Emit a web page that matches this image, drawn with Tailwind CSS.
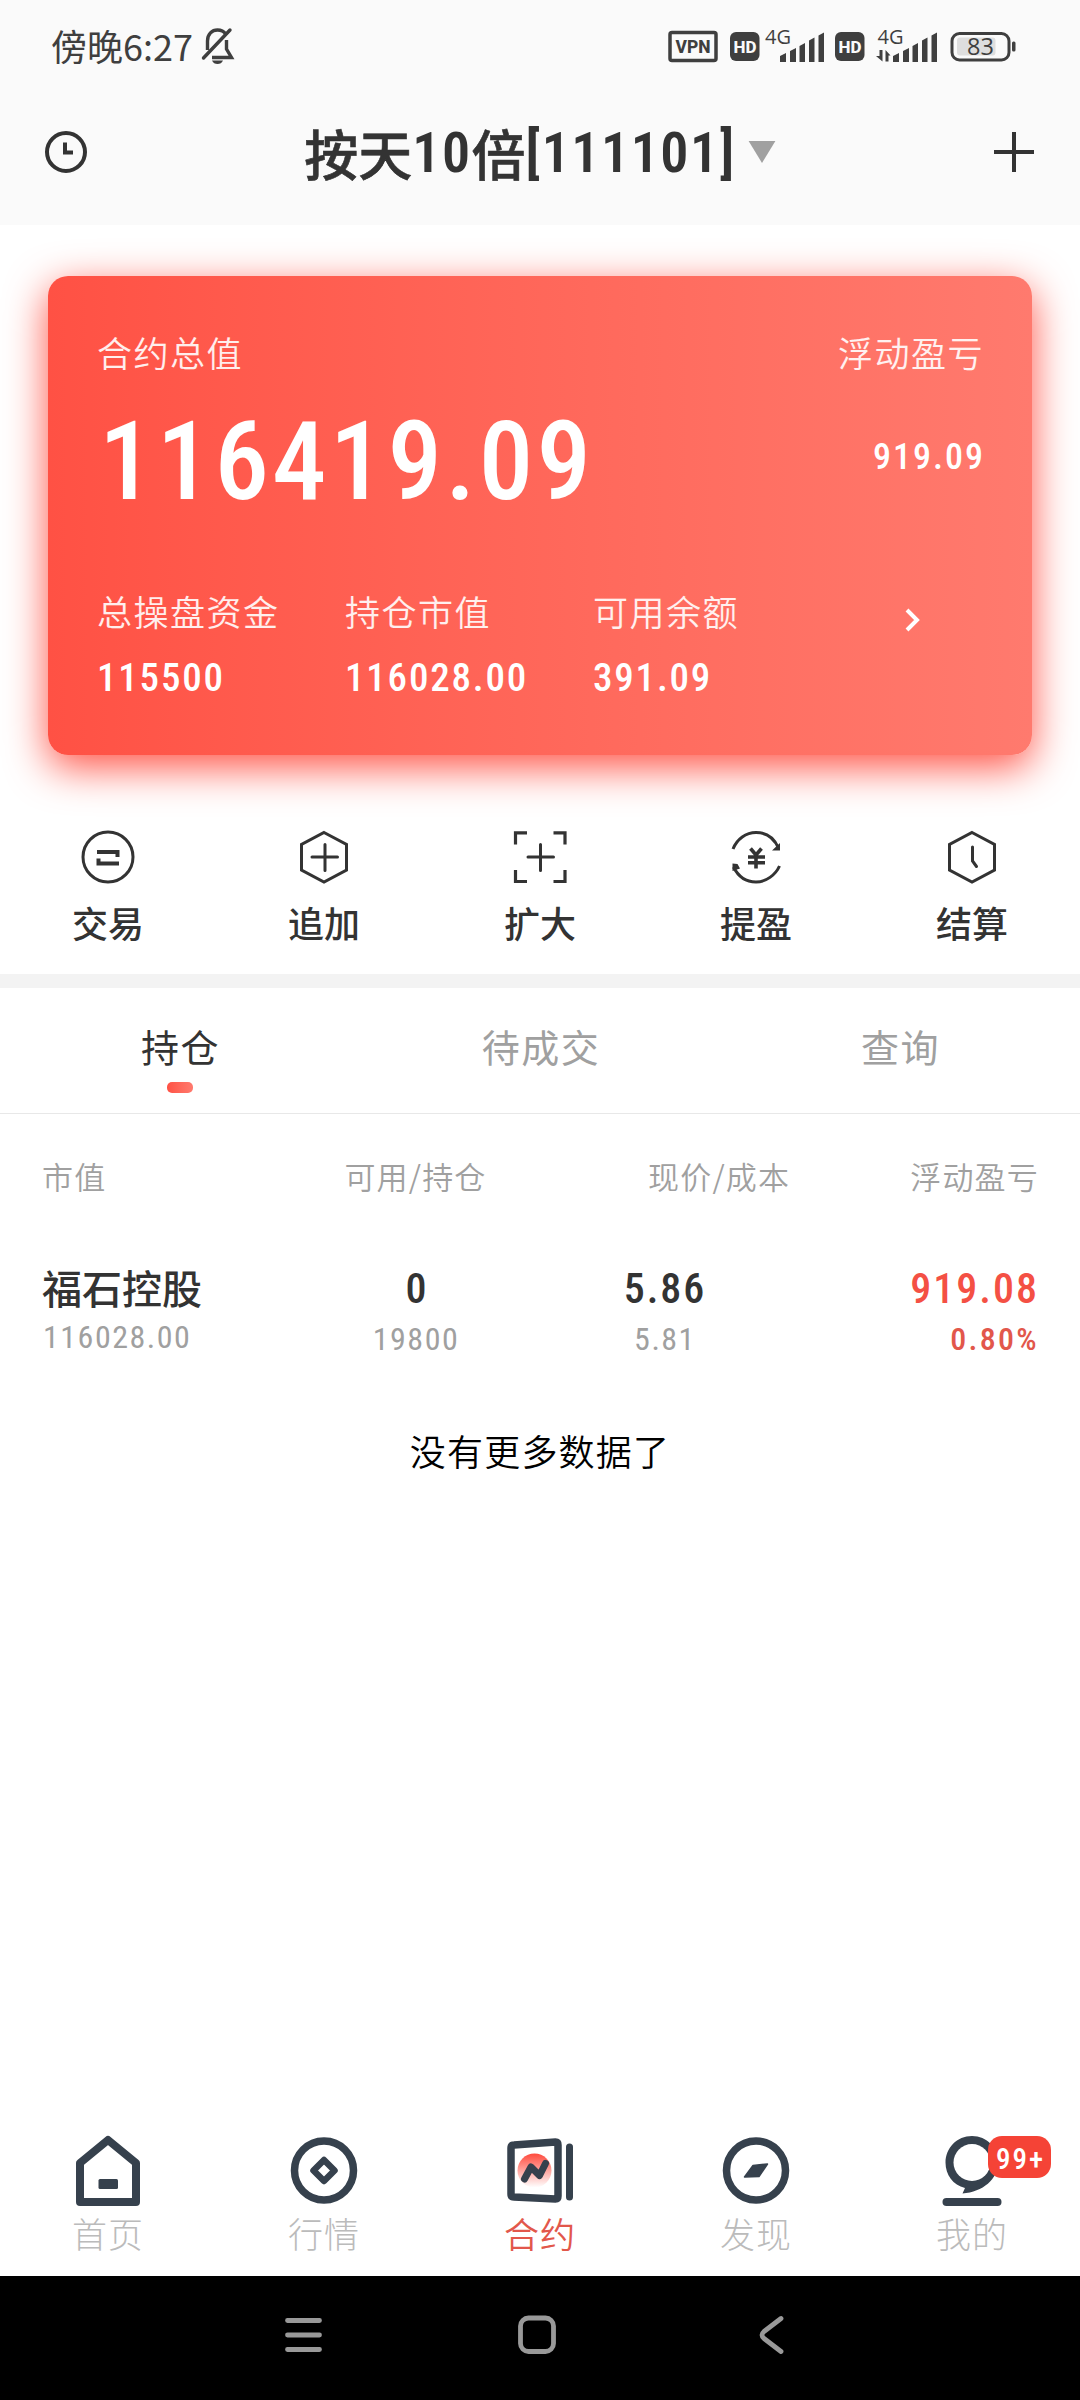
<!DOCTYPE html>
<html lang="zh-CN">
<head>
<meta charset="utf-8">
<title>合约</title>
<script src="https://cdn.jsdelivr.net/npm/@tailwindcss/browser@4"></script>
</head>
<body class="bg-white">
<div class="flex h-[2400px] w-[1080px] flex-col overflow-hidden bg-white font-['Noto_Sans_CJK_SC',sans-serif] text-[#333]">

  <header class="h-[225px] shrink-0 bg-[#fafafa]">
    <div class="flex h-[94px] items-center justify-between pl-[51px] pr-[64px] text-[#3f3f3f]">
      <div class="flex items-center gap-[8px] pb-[3px]">
        <span class="pb-[2px] text-[36px] leading-[40px]">傍晚6:27</span>
        <svg class="h-[38px] w-[34px]" viewBox="0 0 34 38" fill="none" stroke="currentColor" stroke-width="3.4">
          <path d="M6.5 23V14C6.5 7 11 3 16.500 3c3.500 0 6.500 1.500 8.200 4"/><path d="M2.500 31L29 3" stroke-linecap="round"/><path d="M25.500 13v9l5 8.500H11"/><path d="M11 33.500h11c-1 2.500-3 3.500-5.500 3.500s-4.500-1-5.500-3.500z" fill="currentColor" stroke="none"/>
        </svg>
      </div>
      <svg class="h-[60px] w-[350px]" viewBox="666 18 350 60" fill="#3f3f3f">
        <rect x="670" y="33.500" width="46" height="28" rx="2" fill="none" stroke="#3f3f3f" stroke-width="3.500"/>
        <text x="693" y="54" text-anchor="middle" font-family="Roboto" font-weight="800" font-size="18.500" textLength="35" lengthAdjust="spacingAndGlyphs">VPN</text>
        <rect x="730" y="33" width="29.500" height="29" rx="6"/>
        <text x="745" y="54" text-anchor="middle" font-family="Roboto" font-weight="800" font-size="17" textLength="23" lengthAdjust="spacingAndGlyphs" fill="#fafafa">HD</text>
        <text x="765" y="45" font-family="Open Sans" font-weight="500" font-size="20" textLength="26" lengthAdjust="spacingAndGlyphs">4G</text>
        <path d="M780 57l6-3v9h-6zM790 52l6-3v14h-6zM799.500 47l5.500-3v19h-5.500zM809 41.500l5.500-3V63H809zM818.500 36.500l5.500-3V63h-5.500z"/>
        <rect x="835" y="33" width="29.500" height="29" rx="6"/>
        <text x="850" y="54" text-anchor="middle" font-family="Roboto" font-weight="800" font-size="17" textLength="23" lengthAdjust="spacingAndGlyphs" fill="#fafafa">HD</text>
        <text x="877.500" y="45" font-family="Open Sans" font-weight="500" font-size="20" textLength="26" lengthAdjust="spacingAndGlyphs">4G</text>
        <path d="M879.500 51h3v11.500l-6.500-5.500h3.500zM885.500 62.500V51l5 5.500h-2v6z"/>
        <path d="M893 57l6-3v9h-6zM903 52l6-3v14h-6zM912.500 47l5.500-3v19h-5.500zM922 41.500l5.500-3V63H922zM931.500 36.500l5.500-3V63h-5.500z"/>
        <rect x="957" y="38.500" width="38.500" height="18" rx="3" fill="#dedede"/>
        <rect x="952" y="34.500" width="57" height="26.500" rx="7.500" fill="none" stroke="#3f3f3f" stroke-width="3"/>
        <rect x="1012" y="42.500" width="3.500" height="10" rx="1.500"/>
        <text x="980.500" y="55.500" text-anchor="middle" font-family="Open Sans" font-weight="500" font-size="23.500">83</text>
      </svg>
    </div>
    <div class="flex h-[115px] items-center justify-between px-[44px]">
      <svg class="h-[44px] w-[44px]" viewBox="0 0 44 44" fill="none" stroke="#333" stroke-width="4"><circle cx="22" cy="22" r="19"/><path d="M21 12.500V22.500h8"/></svg>
      <div class="flex items-center gap-[12px]">
        <h1 class="flex items-center pt-[2px] font-[650] leading-[60px]"><span class="text-[54px] font-medium [-webkit-text-stroke:0.6px_#333]">按天</span><span class="font-['Roboto'] text-[56px] font-stretch-75% tracking-[1.500px]">10</span><span class="text-[54px] font-medium [-webkit-text-stroke:0.6px_#333]">倍</span><span class="font-['Roboto'] text-[56px] font-stretch-75% tracking-[1.500px]">[111101]</span></h1>
        <svg class="h-[22px] w-[28px]" viewBox="0 0 28 23" fill="#a0a0a0"><path d="M0 0h28L14 23z"/></svg>
      </div>
      <svg class="h-[44px] w-[44px]" viewBox="0 0 44 44" fill="none" stroke="#333" stroke-width="4"><path d="M22 2v40M2 22h40"/></svg>
    </div>
  </header>

  <section class="mx-[48px] mt-[51px] flex h-[479px] shrink-0 flex-col rounded-[20px] bg-linear-to-r from-[#ff5144] to-[#ff7a6e] px-[49px] pt-[51px] text-white shadow-[0_12px_42px_#ff5144]">
    <div class="flex h-[50px] items-center justify-between text-[35px] font-[350] tracking-[1.500px] text-white/90"><span>合约总值</span><span class="mr-[-1px]">浮动盈亏</span></div>
    <div class="mt-[29px] flex h-[110px] items-center justify-between font-['Roboto']">
      <span class="ml-[2px] pt-[2px] text-[109px] font-medium leading-none font-stretch-75% tracking-[3.200px]">116419.09</span>
      <span class="mr-[-2px] pb-[8px] text-[36px] font-medium font-stretch-75% tracking-[2px]">919.09</span>
    </div>
    <div class="mt-[68px] grid grid-cols-[248px_248px_248px_1fr]">
      <div class="flex flex-col"><span class="text-[35px] font-[350] leading-[54px] tracking-[1.500px] text-white/90">总操盘资金</span><span class="mt-[10px] font-['Roboto'] text-[39px] font-medium font-stretch-75% leading-[60px] tracking-[1.800px]">115500</span></div>
      <div class="flex flex-col"><span class="text-[35px] font-[350] leading-[54px] tracking-[1.500px] text-white/90">持仓市值</span><span class="mt-[10px] font-['Roboto'] text-[39px] font-medium font-stretch-75% leading-[60px] tracking-[1.800px]">116028.00</span></div>
      <div class="flex flex-col"><span class="text-[35px] font-[350] leading-[54px] tracking-[1.500px] text-white/90">可用余额</span><span class="mt-[10px] font-['Roboto'] text-[39px] font-medium font-stretch-75% leading-[60px] tracking-[1.800px]">391.09</span></div>
      <svg class="mx-auto mt-[24px] h-[24px] w-[16px]" viewBox="0 0 16 24" fill="none" stroke="#fff" stroke-width="4"><path d="M3 2l10 10L3 22"/></svg>
    </div>
  </section>

  <nav class="mt-[75px] grid shrink-0 grid-cols-5 text-[36px] font-medium leading-[50px]">
    <div class="flex flex-col items-center gap-[13px]">
      <svg class="h-[54px] w-[54px]" viewBox="0 0 54 54" fill="none" stroke="#333" stroke-width="3"><circle cx="27" cy="27" r="25"/><path d="M16 22h20.500v5M38 33.500H17.500v-5" stroke-width="4"/></svg><span>交易</span></div>
    <div class="flex flex-col items-center gap-[13px]">
      <svg class="h-[54px] w-[54px]" viewBox="0 0 54 54" fill="none" stroke="#333" stroke-width="3"><path d="M27 2.500l22.500 12v25.500L27 52 4.500 40V14.500z"/><path d="M28 14.500v26M15 27h25.500" stroke-linecap="round"/></svg><span>追加</span></div>
    <div class="flex flex-col items-center gap-[13px]">
      <svg class="h-[54px] w-[54px]" viewBox="0 0 54 54" fill="none" stroke="#333" stroke-width="3.200"><path d="M14 2.800H2.500V14.500M40.500 2.800H52V14.500M2.500 40v11.500H14M52 40v11.500H40.500"/><path d="M27.500 14.500v26M15 27h25.500" stroke-linecap="round" stroke-width="3"/></svg><span>扩大</span></div>
    <div class="flex flex-col items-center gap-[13px]">
      <svg class="h-[54px] w-[54px]" viewBox="0 0 54 54" fill="none" stroke="#333" stroke-width="3"><path d="M4 19C8 9 17 2.500 27 2.500S45 8 49.500 18M50.500 36C46.500 45 37 52 27 52S9 46 4.500 37"/><path d="M51 13v7.500h-8zM3.500 41v-7.500l5 .5 2.500 4.500z" fill="#333" stroke="none"/><path d="M21.500 18.500l5.500 6.500 5.500-6.500M27 24.500v14M19 27h17M19 32.800h17" stroke-width="3.600"/></svg><span>提盈</span></div>
    <div class="flex flex-col items-center gap-[13px]">
      <svg class="h-[54px] w-[54px]" viewBox="0 0 54 54" fill="none" stroke="#333" stroke-width="3"><path d="M27 2.500l22.500 12v25.500L27 52 4.500 40V14.500z"/><path d="M27.500 17v14l4 5.500" stroke-linecap="round"/></svg><span>结算</span></div>
  </nav>

  <div class="mt-[27px] h-[14px] shrink-0 bg-[#f3f3f3]"></div>

  <div class="grid h-[126px] shrink-0 grid-cols-3 border-b border-[#e8e8e8] pt-[30px] text-center text-[38px] leading-[56px] tracking-[1.500px] text-[#a0a0a0]">
    <div class="flex flex-col items-center"><span class="pl-[1px] text-[#333]">持仓</span><i class="mt-[8px] h-[11px] w-[26px] rounded-[5px] bg-linear-to-r from-[#ff5144] to-[#ff7a6e]"></i></div>
    <span class="pl-[2px]">待成交</span>
    <span class="pl-[1px]">查询</span>
  </div>

  <div class="grid shrink-0 grid-cols-[248px_248px_1fr_180px] px-[42px] pt-[35px] text-[31px] font-[350] leading-[54px] tracking-[1.200px] text-[#a0a0a0]">
    <span>市值</span><span class="pl-[3px] text-center">可用/持仓</span><span class="pl-[110px]">现价/成本</span><span class="mr-[-1px] text-right">浮动盈亏</span>
  </div>

  <div class="mt-[54px] grid shrink-0 grid-cols-[248px_248px_248px_1fr] px-[42px] text-[#a0a0a0]">
    <div class="flex flex-col"><span class="text-[40px] font-medium leading-[60px] text-[#333]">福石控股</span><span class="ml-[1px] font-['Roboto'] text-[32px] font-[450] leading-[40px] font-stretch-75% tracking-[1.500px]">116028.00</span></div>
    <div class="flex flex-col items-center pl-[4px] font-['Roboto'] font-stretch-75%"><span class="pt-[3px] text-[42px] font-medium leading-[57px] text-[#333]">0</span><span class="text-[32px] font-[450] leading-[44px] tracking-[1.500px]">19800</span></div>
    <div class="flex flex-col items-center pl-[6px] font-['Roboto'] font-stretch-75%"><span class="pt-[3px] text-[42px] font-medium leading-[57px] tracking-[2px] text-[#333]">5.86</span><span class="text-[32px] font-[450] leading-[44px] tracking-[1.500px]">5.81</span></div>
    <div class="mr-[-1px] flex flex-col items-end font-['Roboto'] font-stretch-75%"><span class="pt-[3px] text-[42px] font-medium leading-[57px] tracking-[2px] text-[#f45044]">919.08</span><span class="text-[32px] font-medium leading-[44px] tracking-[2.300px] text-[#e2574b]">0.80%</span></div>
  </div>

  <p class="mt-[59px] shrink-0 text-center text-[36px] font-[350] leading-[60px] tracking-[1.200px] text-black">没有更多数据了</p>

  <nav class="mt-auto grid h-[142px] shrink-0 grid-cols-5 text-[35px] font-light leading-[50px] tracking-[1px] text-[#bbb]">
    <div class="flex flex-col items-center">
      <svg class="h-[74px] w-[72px]" viewBox="0 0 72 74" fill="none" stroke="#36414d" stroke-width="8" stroke-linejoin="round"><path d="M36 6l28 23v39H8V29z"/><rect x="26.500" y="45" width="19.500" height="10" rx="1.500" fill="#36414d" stroke="none"/></svg><span>首页</span></div>
    <div class="flex flex-col items-center">
      <svg class="h-[74px] w-[72px]" viewBox="0 0 72 74" fill="none" stroke="#36414d" stroke-width="7.500"><circle cx="36" cy="36.500" r="29.500"/><path d="M36 26l10.500 10.500L36 47 25.500 36.500z" stroke-width="6.500" stroke-linejoin="round"/></svg><span>行情</span></div>
    <div class="flex flex-col items-center text-[#e2574b]">
      <svg class="h-[74px] w-[72px]" viewBox="0 0 72 74" fill="none" stroke="#36414d" stroke-width="7.500" stroke-linecap="round" stroke-linejoin="round">
        <defs><linearGradient id="g" x1="0" y1="0" x2="0" y2="1"><stop offset="0" stop-color="#ff4a3d"/><stop offset="1" stop-color="#fff"/></linearGradient></defs>
        <circle cx="30.500" cy="36.500" r="17" fill="url(#g)" stroke="none"/>
        <path d="M10 11L51.500 8Q54 8 54 11v51Q54 65 51.500 65L10 63Q7 63 7 60V14Q7 11 10 11z"/><path d="M65.500 13v50" stroke-width="7"/><path d="M20.500 45l6.500-12 8.500 8.500 6-12" stroke-width="7"/></svg><span class="font-[350]">合约</span></div>
    <div class="flex flex-col items-center">
      <svg class="h-[74px] w-[72px]" viewBox="0 0 72 74" fill="none" stroke="#36414d" stroke-width="7.500"><circle cx="36" cy="36.500" r="29.500"/><path d="M24.500 43L33 31.500l14.500-1.500L39 42.500z" fill="#36414d" stroke-width="1.500" stroke-linejoin="round"/></svg><span>发现</span></div>
    <div class="relative flex flex-col items-center">
      <svg class="h-[74px] w-[72px]" viewBox="0 0 72 74" fill="#36414d"><path d="M36 2C51 2 62 14 62 28.500C62 45 47 58 26.500 59.500L29 54C17 51 9.500 41 9.500 28.500C9.500 14 21 2 36 2z"/><circle cx="36" cy="28.500" r="18.500" fill="#fff"/><path d="M10.500 68h51" stroke="#36414d" stroke-width="8" stroke-linecap="round"/></svg><span>我的</span>
      <span class="absolute left-[124px] top-[2px] flex h-[42px] w-[63px] items-center justify-center rounded-[14px] bg-[#f54336] pl-[2px] pt-[4px] font-['Roboto'] text-[29px] font-medium tracking-[2px] text-white font-stretch-75%">99+</span>
    </div>
  </nav>

  <footer class="h-[124px] shrink-0 bg-black">
    <svg class="h-[124px] w-[1080px]" viewBox="0 2276 1080 124" fill="none" stroke="#999" stroke-width="4.800" stroke-linecap="round" stroke-linejoin="round">
      <path d="M287.500 2320.500h32M287.500 2335h32M287.500 2349.500h32"/><rect x="520.500" y="2318" width="33" height="33.500" rx="8"/><path d="M781 2318.500l-17 13q-4 3.500 0 7l17 13"/>
    </svg>
  </footer>
</div>
</body>
</html>
